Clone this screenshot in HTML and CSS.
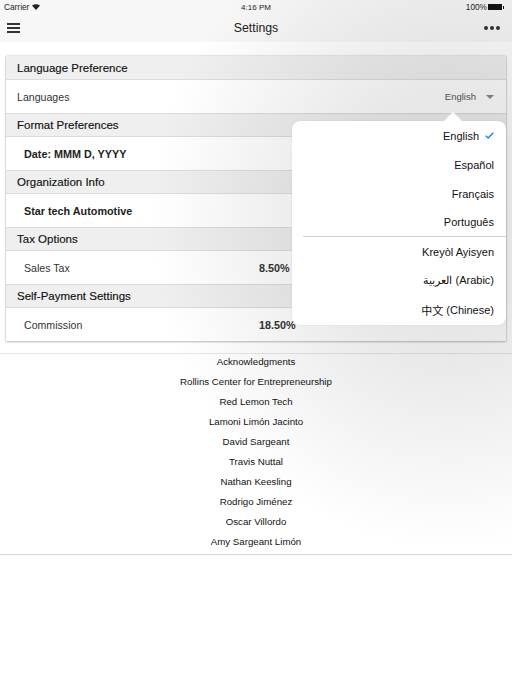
FILE: index.html
```html
<!DOCTYPE html>
<html>
<head>
<meta charset="utf-8">
<link rel="stylesheet" href="styles.css">
</head>
<body>
<div class="page">
  <header class="topbar">
    <div class="status">
      <span class="carrier">Carrier <svg class="wifi" width="8" height="6" viewBox="0 0 8 6"><path d="M4 6 L0 1.6 Q4 -1.2 8 1.6 Z" fill="#222"/></svg></span>
      <span class="time">4:16 PM</span>
      <span class="batt">100% <span class="battery"><span class="fill"></span></span><span class="nub"></span></span>
    </div>
    <div class="navbar">
      <span class="burger"><i></i><i></i><i></i></span>
      <span class="title">Settings</span>
      <span class="more"><i></i><i></i><i></i></span>
    </div>
  </header>

  <main class="content">
    <section class="card">
      <div class="sec-head">Language Preference</div>
      <div class="row">
        <span class="label">Languages</span>
        <span class="select">English <span class="caret"></span></span>
      </div>
      <div class="sec-head">Format Preferences</div>
      <div class="row"><span class="label strong indent">Date: MMM D, YYYY</span></div>
      <div class="sec-head">Organization Info</div>
      <div class="row"><span class="label strong indent">Star tech Automotive</span></div>
      <div class="sec-head">Tax Options</div>
      <div class="row"><span class="label indent">Sales Tax</span><span class="value">8.50%</span></div>
      <div class="sec-head">Self-Payment Settings</div>
      <div class="row"><span class="label indent">Commission</span><span class="value">18.50%</span></div>
    </section>

    <section class="ack">
      <div>Acknowledgments</div>
      <div>Rollins Center for Entrepreneurship</div>
      <div>Red Lemon Tech</div>
      <div>Lamoni Limón Jacinto</div>
      <div>David Sargeant</div>
      <div>Travis Nuttal</div>
      <div>Nathan Keesling</div>
      <div>Rodrigo Jiménez</div>
      <div>Oscar Villordo</div>
      <div>Amy Sargeant Limón</div>
    </section>
  </main>

  <div class="dim"></div>

  <div class="popover">
    <span class="arrow"></span>
    <ul class="options">
      <li class="selected">English <svg class="check" width="9" height="7" viewBox="0 0 9 7"><path d="M0.8 3.8 L3.2 6 L8.2 0.8" fill="none" stroke="#1a7cf5" stroke-width="1.4"/></svg></li>
      <li>Español</li>
      <li>Français</li>
      <li class="sep">Português</li>
      <li>Kreyòl Ayisyen</li>
      <li>العربية&#x200E; (Arabic)</li>
      <li><span class="cjk">中文</span>&nbsp;(Chinese)</li>
    </ul>
  </div>
</div>
</body>
</html>
```

FILE: styles.css
```css
* { box-sizing: border-box; margin: 0; padding: 0; }
html, body { width: 512px; height: 682px; background: #fff; overflow: hidden; }
body { font-family: "Liberation Sans", "Noto Sans CJK SC", sans-serif; color: #111; }
.page { position: relative; width: 512px; height: 682px; }

.topbar { background: #f7f7f7; height: 42px; }
.status { height: 14px; display: flex; align-items: center; justify-content: space-between; padding: 0 8px 0 4px; font-size: 8.3px; color: #222; position: relative; }
.carrier { display: flex; align-items: center; gap: 3px; }
.time { position: absolute; left: 0; right: 0; text-align: center; font-size: 8px; }
.batt { display: flex; align-items: center; gap: 1px; position: relative; z-index: 1; }
.battery { width: 14px; height: 6px; border: 1px solid #111; display: inline-block; }
.battery .fill { display: block; width: 100%; height: 100%; background: #111; }
.nub { width: 1px; height: 3px; background: #111; }

.navbar { height: 28px; display: flex; align-items: center; justify-content: space-between; padding: 0 12px 0 7px; position: relative; }
.title { position: absolute; left: 0; right: 0; text-align: center; font-size: 12.3px; color: #222; }
.burger { display: flex; flex-direction: column; gap: 2px; width: 13px; }
.burger i { display: block; height: 2px; background: #333; }
.more { display: flex; gap: 2px; }
.more i { display: block; width: 4px; height: 4px; border-radius: 50%; background: #333; }

.content { padding: 14px 0 0; }
.card { margin: 0 6px; background: #fff; box-shadow: 0 0 2px rgba(0,0,0,0.25), 0 1px 2px rgba(0,0,0,0.2); }
.sec-head { height: 24px; background: #efefef; border-top: 1px solid #dcdcdc; border-bottom: 1px solid #dcdcdc; display: flex; align-items: center; padding-left: 11px; font-size: 11.5px; font-weight: 500; color: #111; -webkit-text-stroke: 0.15px #111; }
.sec-head:first-child { border-top: none; }
.row { height: 33px; display: flex; align-items: center; padding-left: 11px; font-size: 10.6px; color: #333; position: relative; }
.label.indent { padding-left: 7px; }
.label.strong { font-weight: bold; color: #222; font-size: 10.8px; }
.select { position: absolute; right: 12px; font-size: 9.5px; color: #555; display: flex; align-items: center; gap: 10px; }
.caret { width: 0; height: 0; border-left: 4px solid transparent; border-right: 4px solid transparent; border-top: 4px solid #888; }
.value { position: absolute; left: 253px; font-weight: bold; font-size: 10.8px; color: #333; }

.ack { margin-top: 12px; border-top: 1px solid #e6e6e6; box-shadow: 0 1px 1px rgba(0,0,0,0.15); }
.ack div { height: 20px; line-height: 16px; text-align: center; font-size: 9.7px; color: #111; }

.dim { position: absolute; inset: 0; pointer-events: none;
  background: radial-gradient(ellipse 300px 330px at 450px 220px, rgba(0,0,0,0.12) 0%, rgba(0,0,0,0.09) 40%, rgba(0,0,0,0) 100%); }

.popover { position: absolute; left: 292px; top: 121px; width: 214px; height: 204px; background: #fff; border-radius: 8px; box-shadow: 0 0 2px rgba(0,0,0,0.1); }
.arrow { position: absolute; top: -9px; left: 152px; width: 0; height: 0; border-left: 9px solid transparent; border-right: 9px solid transparent; border-bottom: 9px solid #fff; }
.options { list-style: none; }
.options li { height: 29px; display: flex; align-items: center; justify-content: flex-end; padding-right: 12px; font-size: 11px; color: #111; }
.options li.selected { gap: 6px; }
.options li.sep { border-bottom: 1px solid #d2d2d2; margin-left: 11px; }
.cjk { font-family: "Noto Sans CJK SC", sans-serif; color: #111; }
.check { display: block; }
```
